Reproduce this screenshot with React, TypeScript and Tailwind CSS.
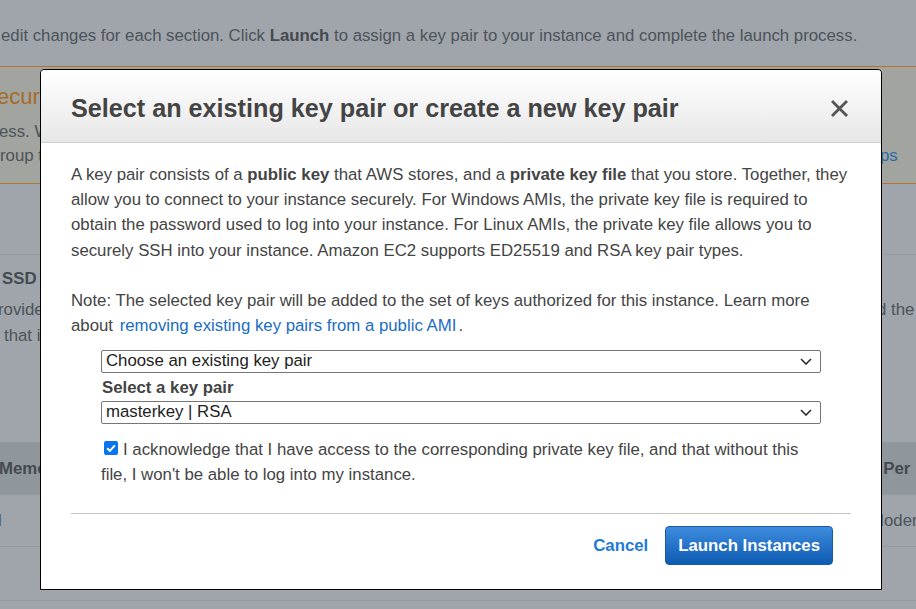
import React from "react";

function Chevron() {
  return (
    <svg width="12" height="7" viewBox="0 0 12 7" className="block shrink-0">
      <path d="M1 1 L6 6 L11 1" fill="none" stroke="#2b2b2b" strokeWidth="1.6" />
    </svg>
  );
}

function FakeSelect({ value }: { value: string }) {
  return (
    <div className="flex h-[23px] items-center justify-between rounded-[2px] border border-[#767676] bg-white pl-[4px] pr-[8px] leading-none text-[#222]">
      <span>{value}</span>
      <Chevron />
    </div>
  );
}

function BgRow({
  left,
  right,
  rightX,
  className = "",
}: {
  left: React.ReactNode;
  right?: React.ReactNode;
  rightX?: string;
  className?: string;
}) {
  return (
    <div className={`flex whitespace-nowrap ${className}`}>
      <div className="w-[40px] overflow-hidden">{left}</div>
      {right && <div className={`ml-auto overflow-hidden ${rightX}`}>{right}</div>}
    </div>
  );
}

export default function App() {
  return (
    <div className="relative h-[609px] w-[916px] overflow-hidden bg-[#9fa5ab] font-['Liberation_Sans',Arial,sans-serif] text-[16.8px] text-[#4d5359]">
      {/* page behind the dialog */}
      <div className="h-[66px] whitespace-nowrap pl-[1px] pt-[23px] leading-[25px]">
        edit changes for each section. Click <b className="text-[#454a50]">Launch</b> to assign a key pair to your
        instance and complete the launch process.
      </div>

      <div className="h-[118px] border-y border-[#b3742f] bg-[#a1a49f] pt-[15px]">
        <BgRow
          className="h-[30px] text-[22px] leading-[30px] text-[#a66c2a]"
          left={<span className="-ml-[3px]">ecurity Group</span>}
        />
        <BgRow className="mt-[8px] leading-[24px]" left={<span className="-ml-[1px]">ess. We</span>} />
        <BgRow
          className="leading-[24px]"
          left={<span>roup to</span>}
          right={<span className="text-[#2a68a8]">ps</span>}
          rightX="w-[36px]"
        />
      </div>

      <div className="h-[71px] border-b border-[#939aa0]" />

      <div className="h-[188px] border-b border-[#939aa0] pt-[11px] leading-[25px]">
        <BgRow left={<b className="ml-[2px] text-[#454a50]">SSD</b>} />
        <BgRow
          className="mt-[6px] leading-[26px]"
          left={<span className="-ml-[2px]">rovide</span>}
          right={<span>d the</span>}
          rightX="w-[39px]"
        />
        <BgRow className="leading-[26px]" left={<span className="ml-[4px]">that is</span>} />
      </div>

      <div className="flex h-[52px] items-center border-b border-[#939aa0] bg-[#8f969c] font-bold text-[#454a50]">
        <BgRow
          className="w-full"
          left={<span className="-ml-[1px]">Memory</span>}
          right={<span className="-ml-[5px]">t Per</span>}
          rightX="w-[38px]"
        />
      </div>

      <div className="flex h-[52px] items-center border-b border-[#939aa0]">
        <BgRow
          className="w-full"
          left={<span className="-ml-[2px]">l</span>}
          right={<span className="-ml-[6px]">Moderate</span>}
          rightX="w-[40px]"
        />
      </div>

      <div className="h-[54px] border-b border-[#939aa0]" />

      {/* dialog */}
      <div className="absolute left-[40px] top-[69px] flex h-[521px] w-[842px] flex-col rounded-t-[4px] border border-black bg-white text-[#444]">
        <div className="flex h-[73px] items-center justify-between rounded-t-[4px] border-b border-[#cfcfcf] bg-linear-to-b from-white to-[#e7e7e7] px-[30px] pt-[5px]">
          <h2 className="text-[25.2px] font-bold leading-normal text-[#444]">
            Select an existing key pair or create a new key pair
          </h2>
          <svg width="17" height="17" viewBox="0 0 17 17" className="mr-[3px] block">
            <path d="M2 2 L15 15 M15 2 L2 15" stroke="#545454" strokeWidth="2.8" strokeLinecap="square" />
          </svg>
        </div>

        <div className="px-[30px] pt-[19px] leading-[25.2px]">
          <p>
            A key pair consists of a <b>public key</b> that AWS stores, and a <b>private key file</b> that you store.
            Together, they allow you to connect to your instance securely. For Windows AMIs, the private key file is
            required to obtain the password used to log into your instance. For Linux AMIs, the private key file allows
            you to securely SSH into your instance. Amazon EC2 supports ED25519 and RSA key pair types.
          </p>
          <p className="mt-[25px]">
            Note: The selected key pair will be added to the set of keys authorized for this instance. Learn more about{" "}
            <a className="px-[2px] text-[#1a6dc2]">removing existing key pairs from a public AMI</a>.
          </p>

          <div className="mt-[12px] px-[30px]">
            <FakeSelect value="Choose an existing key pair" />
            <div className="mt-[5px] pl-[1px] font-bold leading-[19px]">Select a key pair</div>
            <div className="mt-[4px]">
              <FakeSelect value="masterkey | RSA" />
            </div>
            <p className="mt-[13px] leading-[25.2px]">
              <span className="ml-[3px] mr-[5px] inline-block h-[14px] w-[14px] rounded-[2px] bg-[#0a74ee] align-baseline">
                <svg width="14" height="14" viewBox="0 0 14 14" className="block">
                  <path d="M3.2 7.2 L5.9 9.9 L10.9 4.3" fill="none" stroke="white" strokeWidth="2" />
                </svg>
              </span>
              I acknowledge that I have access to the corresponding private key file, and that without this file, I
              won't be able to log into my instance.
            </p>
          </div>

          <div className="mt-[25px] h-px bg-[#c4c4c4]" />

          <div className="mr-[18px] mt-[12px] flex items-center justify-end">
            <a className="mr-[17px] font-bold text-[#1f7ad6]">Cancel</a>
            <button className="h-[39px] rounded-[4px] border border-[#1b5aa3] bg-linear-to-b from-[#3d8cdf] to-[#0a5bb2] px-[12px] font-bold text-white">
              Launch Instances
            </button>
          </div>
        </div>
      </div>
    </div>
  );
}
